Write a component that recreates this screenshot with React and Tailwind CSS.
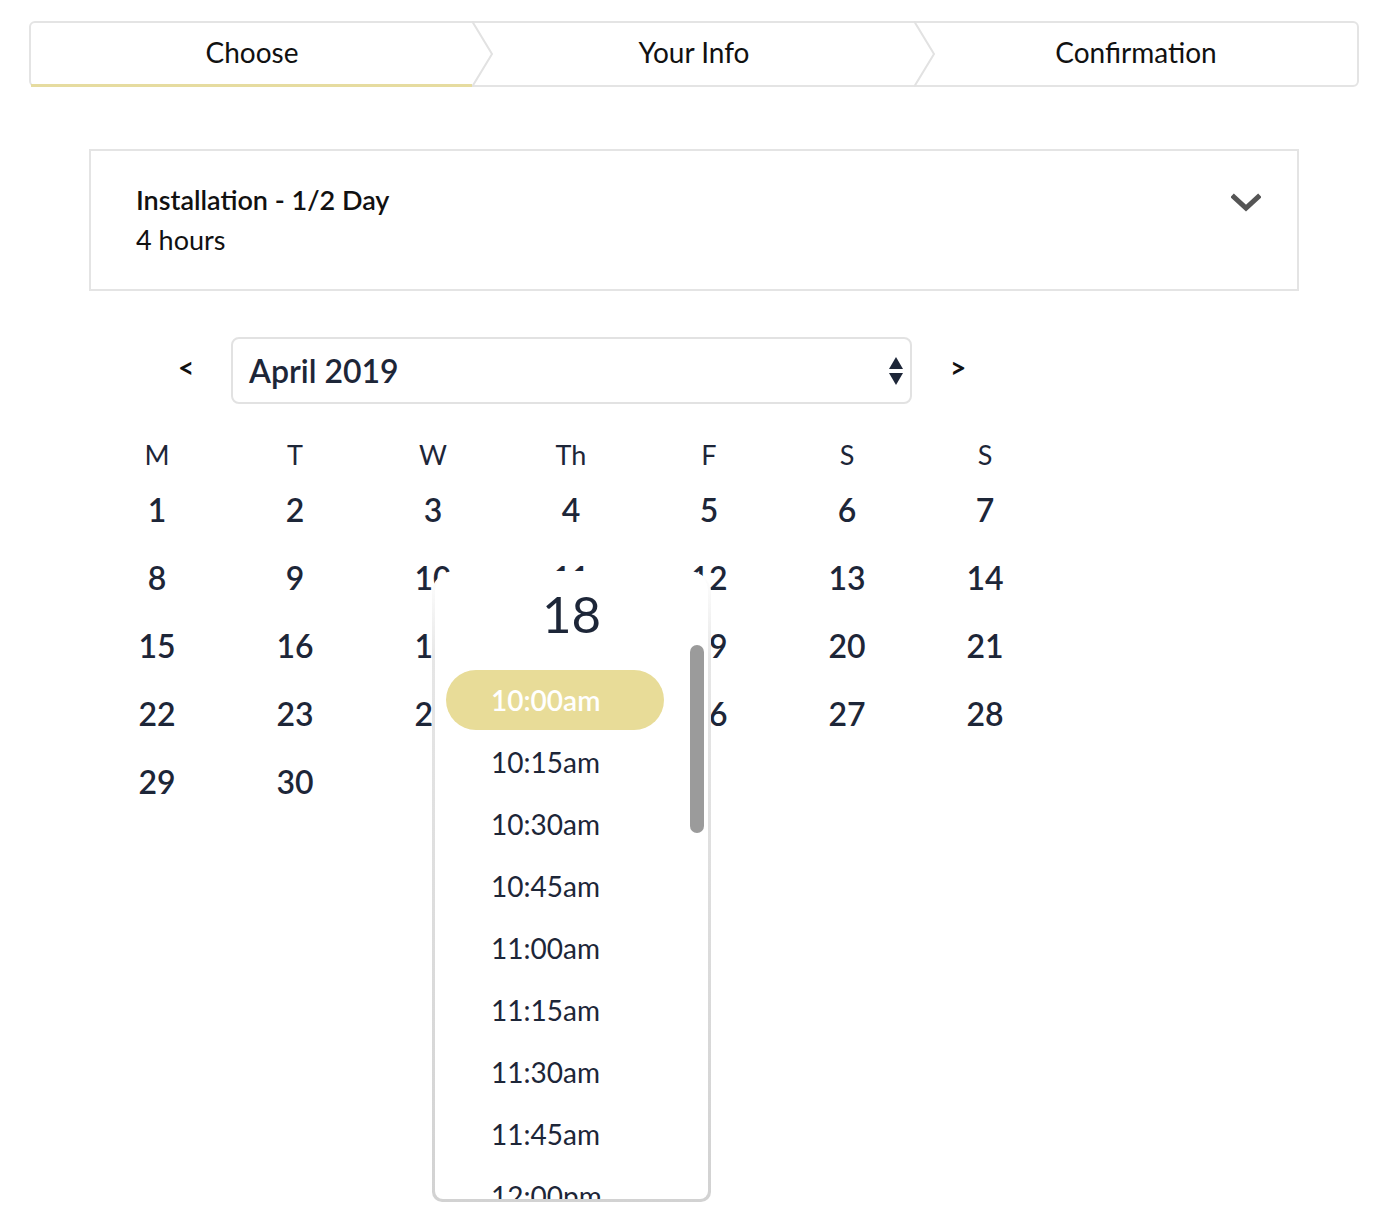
import React from 'react'

const steps = ['Choose', 'Your Info', 'Confirmation']
const dayNames = ['M', 'T', 'W', 'Th', 'F', 'S', 'S']
const weeks = [
  [1, 2, 3, 4, 5, 6, 7],
  [8, 9, 10, 11, 12, 13, 14],
  [15, 16, 17, 18, 19, 20, 21],
  [22, 23, 24, 25, 26, 27, 28],
  [29, 30, null, null, null, null, null],
]
const times = ['10:00am', '10:15am', '10:30am', '10:45am', '11:00am', '11:15am', '11:30am', '11:45am', '12:00pm']

function Steps() {
  return (
    <div className="mx-[29px] mt-[21px] flex h-[66px] rounded-[6px] border-2 border-[#e4e4e4] bg-white">
      {steps.map((s, i) => (
        <div key={s} className="relative flex flex-1 items-center justify-center pb-[4px]">
          <span className="text-[28px] text-[#111]">{s}</span>
          {i === 0 && <div className="absolute bottom-[-2px] left-0 right-0 h-[3px] bg-[#e6dca0]" />}
          {i < 2 && (
            <svg className="absolute right-[-21px] top-[-2px] z-10" width="22" height="66" viewBox="0 0 22 66">
              <polyline points="0,0 20,33 0,66" fill="white" stroke="#e2e2e2" strokeWidth="2" />
            </svg>
          )}
        </div>
      ))}
    </div>
  )
}

function ServiceCard() {
  return (
    <div className="mx-[89px] mt-[62px] flex h-[142px] items-center justify-between border-2 border-[#e4e4e4] pl-[45px] pr-[36px]">
      <div className="text-[27px] leading-[40px] text-[#111]">
        <div className="font-semibold">Installation - 1/2 Day</div>
        <div>4 hours</div>
      </div>
      <svg className="mb-[34px]" width="30" height="20" viewBox="0 0 30 20">
        <polyline points="3,4 15,15 27,4" fill="none" stroke="#555" strokeWidth="5" strokeLinecap="square" />
      </svg>
    </div>
  )
}

function MonthNav() {
  return (
    <div className="mt-[46px] flex items-center pl-[88px]">
      <span className="w-[143px] pl-[90px] pb-[8px] text-[28px] font-bold text-[#111]">&lt;</span>
      <div className="flex h-[67px] w-[681px] items-center justify-between rounded-[8px] border-2 border-[#e2e2e2] pl-[16px] pr-[6px]">
        <span className="text-[32px] font-semibold text-[#1d2638]">April 2019</span>
        <svg width="16" height="32" viewBox="0 0 16 32">
          <polygon points="8,2 15,14 1,14" fill="#1d2638" />
          <polygon points="1,18 15,18 8,30" fill="#1d2638" />
        </svg>
      </div>
      <span className="ml-[38px] pb-[8px] text-[28px] font-bold text-[#111]">&gt;</span>
    </div>
  )
}

function TimePopup() {
  return (
    <div className="absolute left-[344px] top-[137px] z-20 h-[631px] w-[279px] rounded-t-[22px] rounded-b-[10px] bg-[linear-gradient(to_bottom,#ffffff_0px,#e6e6e6_90px,#d2d2d2_100%)] px-[3px] pb-[3px]">
      <div className="relative h-full overflow-hidden rounded-t-[20px] rounded-b-[8px] bg-white">
        <div className="pt-[15px] text-center text-[51px] leading-[56px] text-[#1d2638]">18</div>
        <div className="pt-[27px]">
          {times.map((t, i) => (
            <div key={t} className="flex h-[62px] items-center">
              {i === 0 ? (
                <div className="ml-[11px] flex h-[60px] w-[218px] items-center rounded-full bg-[#e8dc98] pl-[45px] text-[28px] font-semibold text-white">
                  {t}
                </div>
              ) : (
                <div className="pl-[56px] text-[28px] text-[#1d2638]">{t}</div>
              )}
            </div>
          ))}
        </div>
        <div className="absolute left-[255px] top-[74px] h-[188px] w-[14px] rounded-full bg-[#9b9b9b]" />
      </div>
    </div>
  )
}

function Calendar() {
  return (
    <div className="relative ml-[88px] mt-[30px] w-[966px]">
      <div className="grid h-[42px] grid-cols-7 items-center">
        {dayNames.map((d, i) => (
          <div key={i} className="text-center text-[27px] text-[#1d2638]">{d}</div>
        ))}
      </div>
      {weeks.map((w, wi) => (
        <div key={wi} className="grid h-[68px] grid-cols-7 items-center">
          {w.map((n, i) => (
            <div key={i} className="text-center text-[32px] font-semibold text-[#1d2638]">{n}</div>
          ))}
        </div>
      ))}
      <TimePopup />
    </div>
  )
}

export default function App() {
  return (
    <div className="min-h-[1227px] w-[1388px] bg-white font-['Lato','Liberation_Sans',sans-serif]">
      <Steps />
      <ServiceCard />
      <MonthNav />
      <Calendar />
    </div>
  )
}
